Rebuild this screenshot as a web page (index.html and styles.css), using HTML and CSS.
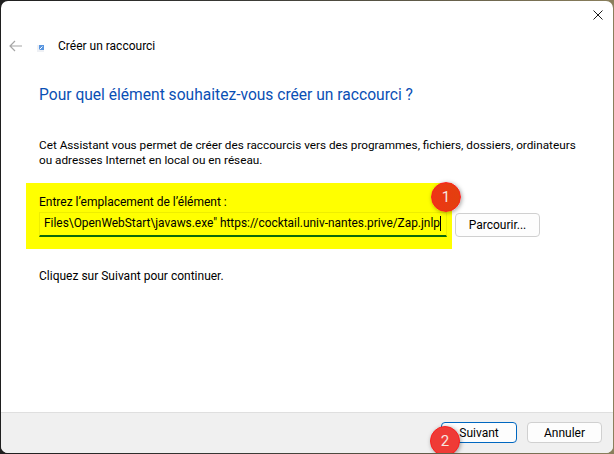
FILE: index.html
```html
<!DOCTYPE html>
<html lang="fr">
    <head>
        <meta charset="UTF-8">
        <title>Créer un raccourci</title>
        <link rel="stylesheet" href="styles.css">
    </head>
    <body>
        <div class="window">
            <div class="titlebar">
                <svg class="close" width="10" height="10" viewBox="0 0 10 10">
                    <path d="M0.5 0.5 L9.5 9.5 M9.5 0.5 L0.5 9.5" stroke="#1a1a1a" stroke-width="1" fill="none"></path>
                </svg>
            </div>
            <div class="nav">
                <svg class="back" width="13" height="12" viewBox="0 0 13 12">
                    <path d="M6 1 L1 6 L6 11 M1 6 L13 6" stroke="#a6a6a6" stroke-width="1.2" fill="none"></path>
                </svg>
                <svg class="shortcut" width="7" height="7" viewBox="0 0 7 7">
                    <rect width="7" height="7" fill="#eef0f4"></rect>
                    <rect x="2" y="0" width="5" height="5" fill="#5a96e0"></rect>
                    <path d="M2.5 4.5 L5.5 1.5" stroke="#ffffff" stroke-width="1"></path>
                </svg>
                <span class="nav_title">Créer un raccourci</span>
            </div>
            <div class="content">
                <h1 class="heading">Pour quel élément souhaitez-vous créer un raccourci ?</h1>
                <p class="intro">Cet Assistant vous permet de créer des raccourcis vers des programmes, fichiers, dossiers, ordinateurs ou adresses Internet en local ou en réseau.</p>
                <div class="field_row">
                    <div class="highlight">
                        <label class="field_label">Entrez l’emplacement de l’élément :</label>
                        <div class="field_input"><span class="field_text">Files\OpenWebStart\javaws.exe" https://cocktail.univ-nantes.prive/Zap.jnlp</span></div>
                        <div class="badge badge_one">1</div>
                    </div>
                    <button class="btn btn_browse">Parcourir...</button>
                </div>
                <p class="hint">Cliquez sur Suivant pour continuer.</p>
            </div>
            <div class="footer">
                <button class="btn btn_primary">Suivant</button>
                <button class="btn">Annuler</button>
                <div class="badge badge_two">2</div>
            </div>
        </div>
    </body>
</html>
```

FILE: styles.css
```css
html, body{
    margin: 0;
    height: 100%;
}

body{
    background: linear-gradient(to right, #1f1f1f, #3a3a36 40%, #8a7f5c);
    font-family: Roboto, "Noto Sans", sans-serif;
    overflow: hidden;
}

.window{
    display: flex;
    flex-direction: column;
    position: relative;
    box-sizing: border-box;
    width: 612px;
    height: 452px;
    margin: 1px 0 0 1px;
    background: #ffffff;
    border-radius: 7px;
    overflow: hidden;
    color: #000000;
}

.titlebar{
    display: flex;
    justify-content: flex-end;
    height: 31px;
    padding: 9px 10px 0 0;
    box-sizing: border-box;
}

.nav{
    display: flex;
    align-items: center;
    height: 28px;
    padding-left: 8px;
}

.back{ margin-right: 15px; }
.shortcut{ margin: 5px 14px 0 0; }

.nav_title{
    font-size: 12px;
}

.content{
    flex: 1;
    padding: 0 38px;
}

.heading{
    margin: 25px 0 0;
    font-size: 15.6px;
    line-height: 20px;
    font-weight: normal;
    color: #0a4fb4;
}

.intro{
    margin: 33px -10px 0 0;
    font-size: 11.76px;
    line-height: 15px;
}

.field_row{
    display: flex;
    align-items: flex-end;
    margin: 15px 0 0 -13px;
}

.highlight{
    position: relative;
    box-sizing: border-box;
    width: 426px;
    height: 66px;
    padding: 10px 5px 0 13px;
    background: #ffff00;
}

.field_label{
    display: block;
    font-size: 12px;
    line-height: 16px;
    padding-top: 1px;
}

.field_input{
    display: flex;
    align-items: center;
    box-sizing: border-box;
    height: 25px;
    margin-top: 2px;
    padding: 0 0 2px 4px;
    border: 1px solid #eeee00;
    border-bottom: 2px solid #0b6a0b;
    overflow: hidden;
    white-space: nowrap;
}

.field_text{
    border-right: 1px solid #000000;
    font-size: 11.9px;
    line-height: 15px;
}

.btn{
    box-sizing: border-box;
    width: 75px;
    height: 21px;
    padding: 0;
    background: #fdfdfd;
    border: 1px solid #d0d0d0;
    border-radius: 4px;
    font-family: inherit;
    font-size: 12px;
    color: #000000;
}

.btn_browse{
    width: 85px;
    height: 24px;
    margin: 0 0 12px 3px;
}

.btn_primary{
    width: 76px;
    border-color: #0067c0;
}

.hint{
    margin: 19px 0 0;
    font-size: 12px;
    line-height: 16px;
}

.footer{
    display: flex;
    justify-content: flex-end;
    gap: 10px;
    height: 41px;
    padding: 9px 11px 0 0;
    box-sizing: border-box;
    background: #f0f0f0;
    border-top: 1px solid #dfdfdf;
}

.badge{
    position: absolute;
    width: 28px;
    height: 28px;
    background: linear-gradient(to right, #ee3516, #e2400e);
    border: 1px solid #fb1f1f;
    border-radius: 50%;
    box-shadow: 1px 1px 4px rgba(0, 0, 0, 0.35);
    text-align: center;
    font-size: 15px;
    line-height: 28px;
    color: #f6e6e0;
}

.badge_one{
    top: -1px;
    right: -9px;
}

.badge_two{
    left: 429px;
    top: 425px;
    background: #ef3b36;
}
```
